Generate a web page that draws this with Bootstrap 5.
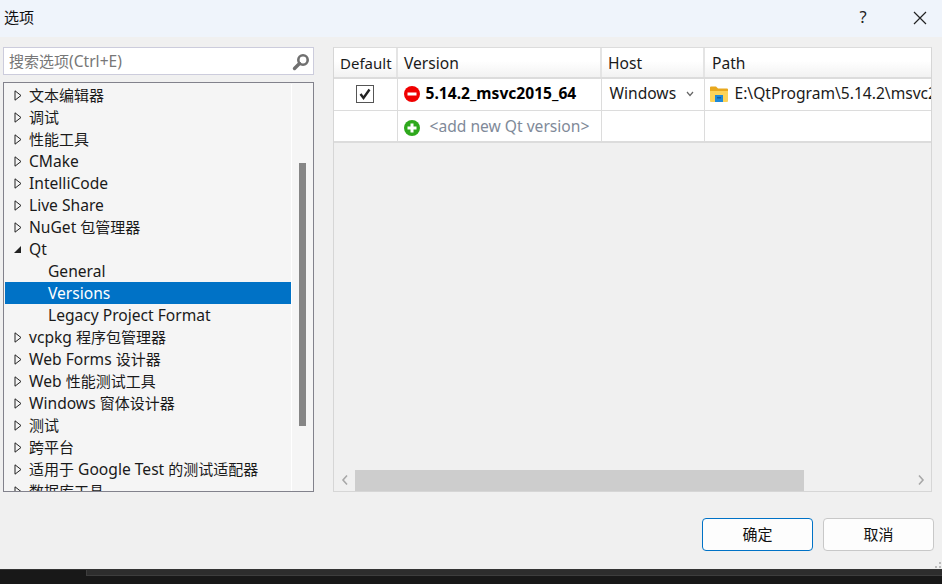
<!DOCTYPE html>
<html lang="zh">
<head>
<meta charset="utf-8">
<title>选项</title>
<link rel="stylesheet" href="https://cdn.jsdelivr.net/npm/bootstrap@5.3.0/dist/css/bootstrap.min.css">
<style>
html,body{height:584px;overflow:hidden;margin:0}
body{background:#181818;font-family:"Noto Sans","Noto Sans CJK SC",sans-serif;font-size:15.6px;color:#1a1a1a}
.cj{font-size:15px}
.dlg{height:570px;background:#f0f0f0;position:relative;border-bottom:1px solid #333}
.dlg-title{height:37px;background:#eff4fb;padding:0 2px 3px 4px}
.dlg-title .ttl{font-size:15px;color:#111}
.tbtn{width:40px;height:34px;padding:0;border:0;background:none;color:#222;font-size:16.5px}
.tbtn.helpbtn{margin-right:21px;width:32px}
.main-area{height:445px;margin-top:10px;padding:0 10px 0 3px;gap:19px}
.leftcol{width:311px;gap:7px}
.searchbox{height:28px;background:#fff;border:1px solid #ccccdc;padding:1px 3px 0 5px;color:#777}
.treebox{height:410px;background:#f5f5f5;border:1px solid #82828c;padding:1px 0 0 1px;overflow:hidden}
.treelist{width:286px;flex:none;height:408px;overflow:hidden}
.tnode{height:22px;line-height:22px;padding-left:9px;white-space:nowrap;gap:7px}
.tnode.kid{padding-left:43px}
.tnode.sel{background:#0072c6;color:#fff}
.arrow{flex:none;width:8px;height:11px}
.tree-sb{width:21px;flex:none;background:#f5f5f5;border-left:1px solid #fff;padding-top:79px;padding-left:7px}
.tree-thumb{width:7px;height:263px;background:#868686}
.rightcol{width:599px;background:#f0f0f0;border:1px solid #d6d6d6;border-top-color:#dcdcdc}
.tblwrap{flex:1;overflow:hidden}
.qt-grid{table-layout:fixed;width:640px;border-collapse:collapse;margin:0}
.qt-grid th,.qt-grid td{border:1px solid #dcdcdc;border-top:0;padding:0 6px;font-weight:400;white-space:nowrap;overflow:hidden;background:#fff}
.qt-grid th{height:30px;padding-top:2px;background:linear-gradient(#fff 45%,#f2f2f2);border-bottom:2px solid #dcdcdc;border-right:2px solid #e4e4e4}
.qt-grid th:first-child{font-size:15px}
.qt-grid th:nth-child(4){padding-left:7px}
.qt-grid td:nth-child(3){padding-left:8px}
.qt-grid td:nth-child(4){padding-left:5px}
.qt-grid tbody tr:first-child td{height:32px}
.qt-grid tbody tr:last-child td{height:32px;padding-top:4px;border-bottom:2px solid #dcdcdc}
.qt-grid td:first-child,.qt-grid th:first-child{border-left:0}
.celltxt{position:relative;top:-1px}
.chk{width:18px;height:18px;border:1px solid #555;background:#fff;display:block;margin:0 auto}
.vname{font-weight:700;color:#000}
.addnew{color:#7f8a99}
.ico-run{margin-right:6px}
.ico-add{margin-right:10px}
.ico-dir{margin-right:7px}
.ico-drop{margin-right:4px}
.hsb{height:22px;padding:0;background:#f0f0f0}
.hsb-arrow{width:21px;flex:none;color:#a0a0a0}
.hsb-thumb{width:449px;background:#cdcdcd;height:21px}
.foot{gap:10px;padding:26px 8px 0 0}
.dlgbtn{width:111px;height:33px;background:#fdfdfd;border:1px solid #c8c8c8;border-radius:4px;font-size:15px;color:#111;padding:0}
.dlgbtn.dflt{border-color:#0072c6}
.grip{position:absolute;right:1px;bottom:1px}
.strip{height:13px;padding-left:86px}
.strip-field{height:6px;background:#2d2d2d;border-bottom:1px solid #3d3d3d;border-left:1px solid #3d3d3d}
</style>
</head>
<body>
<div class="dlg d-flex flex-column">
  <div class="dlg-title d-flex align-items-center">
    <span class="ttl flex-grow-1">选项</span>
    <button class="tbtn helpbtn" type="button" aria-label="help">?</button>
    <button class="tbtn" type="button" aria-label="close"><svg width="14" height="14" viewBox="0 0 14 14"><path d="M1 1 13 13M13 1 1 13" stroke="#222" stroke-width="1.2" fill="none"/></svg></button>
  </div>
  <div class="main-area d-flex">
    <div class="leftcol d-flex flex-column">
      <div class="searchbox d-flex align-items-center justify-content-between">
        <span><span class="cj">搜索选项</span>(Ctrl+E)</span>
        <svg width="18" height="18" viewBox="0 0 18 18"><circle cx="11" cy="7" r="4.7" fill="none" stroke="#707070" stroke-width="2.6"/><path d="M7.5 10.5 2.5 15.5" stroke="#707070" stroke-width="3.4" stroke-linecap="round"/></svg>
      </div>
      <div class="treebox d-flex">
        <div class="treelist">
          <div class="tnode d-flex align-items-center"><svg class="arrow" viewBox="0 0 8 11"><path d="M1 .8 7 5.5 1 10.2Z" fill="none" stroke="#222"/></svg><span class="cj">文本编辑器</span></div>
          <div class="tnode d-flex align-items-center"><svg class="arrow" viewBox="0 0 8 11"><path d="M1 .8 7 5.5 1 10.2Z" fill="none" stroke="#222"/></svg><span class="cj">调试</span></div>
          <div class="tnode d-flex align-items-center"><svg class="arrow" viewBox="0 0 8 11"><path d="M1 .8 7 5.5 1 10.2Z" fill="none" stroke="#222"/></svg><span class="cj">性能工具</span></div>
          <div class="tnode d-flex align-items-center"><svg class="arrow" viewBox="0 0 8 11"><path d="M1 .8 7 5.5 1 10.2Z" fill="none" stroke="#222"/></svg>CMake</div>
          <div class="tnode d-flex align-items-center"><svg class="arrow" viewBox="0 0 8 11"><path d="M1 .8 7 5.5 1 10.2Z" fill="none" stroke="#222"/></svg>IntelliCode</div>
          <div class="tnode d-flex align-items-center"><svg class="arrow" viewBox="0 0 8 11"><path d="M1 .8 7 5.5 1 10.2Z" fill="none" stroke="#222"/></svg>Live Share</div>
          <div class="tnode d-flex align-items-center"><svg class="arrow" viewBox="0 0 8 11"><path d="M1 .8 7 5.5 1 10.2Z" fill="none" stroke="#222"/></svg><span>NuGet <span class="cj">包管理器</span></span></div>
          <div class="tnode d-flex align-items-center"><svg class="arrow" viewBox="0 0 8 11"><path d="M7 2 7 9 0 9Z" fill="#222"/></svg>Qt</div>
          <div class="tnode kid d-flex align-items-center">General</div>
          <div class="tnode kid sel d-flex align-items-center">Versions</div>
          <div class="tnode kid d-flex align-items-center">Legacy Project Format</div>
          <div class="tnode d-flex align-items-center"><svg class="arrow" viewBox="0 0 8 11"><path d="M1 .8 7 5.5 1 10.2Z" fill="none" stroke="#222"/></svg><span>vcpkg <span class="cj">程序包管理器</span></span></div>
          <div class="tnode d-flex align-items-center"><svg class="arrow" viewBox="0 0 8 11"><path d="M1 .8 7 5.5 1 10.2Z" fill="none" stroke="#222"/></svg><span>Web Forms <span class="cj">设计器</span></span></div>
          <div class="tnode d-flex align-items-center"><svg class="arrow" viewBox="0 0 8 11"><path d="M1 .8 7 5.5 1 10.2Z" fill="none" stroke="#222"/></svg><span>Web <span class="cj">性能测试工具</span></span></div>
          <div class="tnode d-flex align-items-center"><svg class="arrow" viewBox="0 0 8 11"><path d="M1 .8 7 5.5 1 10.2Z" fill="none" stroke="#222"/></svg><span>Windows <span class="cj">窗体设计器</span></span></div>
          <div class="tnode d-flex align-items-center"><svg class="arrow" viewBox="0 0 8 11"><path d="M1 .8 7 5.5 1 10.2Z" fill="none" stroke="#222"/></svg><span class="cj">测试</span></div>
          <div class="tnode d-flex align-items-center"><svg class="arrow" viewBox="0 0 8 11"><path d="M1 .8 7 5.5 1 10.2Z" fill="none" stroke="#222"/></svg><span class="cj">跨平台</span></div>
          <div class="tnode d-flex align-items-center"><svg class="arrow" viewBox="0 0 8 11"><path d="M1 .8 7 5.5 1 10.2Z" fill="none" stroke="#222"/></svg><span><span class="cj">适用于</span> Google Test <span class="cj">的测试适配器</span></span></div>
          <div class="tnode d-flex align-items-center"><svg class="arrow" viewBox="0 0 8 11"><path d="M1 .8 7 5.5 1 10.2Z" fill="none" stroke="#222"/></svg><span class="cj">数据库工具</span></div>
        </div>
        <div class="tree-sb"><div class="tree-thumb"></div></div>
      </div>
    </div>
    <div class="rightcol d-flex flex-column">
      <div class="tblwrap">
        <table class="qt-grid">
          <colgroup><col style="width:63px"><col style="width:204px"><col style="width:103px"><col style="width:270px"></colgroup>
          <thead><tr><th>Default</th><th>Version</th><th>Host</th><th>Path</th></tr></thead>
          <tbody>
            <tr>
              <td><span class="chk"><svg width="16" height="16" viewBox="0 0 16 16" class="d-block"><path d="M3.5 8 6.5 12 12.5 3.5" fill="none" stroke="#222" stroke-width="2.4"/></svg></span></td>
              <td><div class="d-flex align-items-center"><svg width="16" height="16" viewBox="0 0 16 16" class="flex-shrink-0 ico-run"><circle cx="8" cy="8" r="8" fill="#f00000"/><rect x="3.5" y="6.5" width="9" height="3" fill="#fff"/></svg><span class="vname celltxt">5.14.2_msvc2015_64</span></div></td>
              <td><div class="d-flex align-items-center justify-content-between"><span class="celltxt">Windows</span><svg width="8" height="6" viewBox="0 0 8 6" class="ico-drop"><path d="M1 1 4 4.5 7 1" fill="none" stroke="#666" stroke-width="1.2"/></svg></div></td>
              <td><div class="d-flex align-items-center"><svg width="18" height="16" viewBox="0 0 18 16" class="flex-shrink-0 ico-dir"><path d="M0 1.5a1 1 0 0 1 1-1h5l2 2h9a1 1 0 0 1 1 1V7H0Z" fill="#e8a81e"/><path d="M0 5h18v10a1 1 0 0 1-1 1H1a1 1 0 0 1-1-1Z" fill="#fbd35a"/><rect x="5" y="9" width="8" height="7" fill="#1e88d8"/><rect x="7" y="11" width="4" height="1.5" fill="#0f5fa8"/></svg><span class="celltxt">E:\QtProgram\5.14.2\msvc2015_64</span></div></td>
            </tr>
            <tr>
              <td></td>
              <td><div class="d-flex align-items-center"><svg width="16" height="16" viewBox="0 0 16 16" class="flex-shrink-0 ico-add"><circle cx="8" cy="8" r="8" fill="#2ea81c"/><path d="M8 3.5v9M3.5 8h9" stroke="#fff" stroke-width="3"/></svg><span class="addnew celltxt">&lt;add new Qt version&gt;</span></div></td>
              <td></td>
              <td></td>
            </tr>
          </tbody>
        </table>
      </div>
      <div class="hsb d-flex align-items-center">
        <div class="hsb-arrow d-flex justify-content-center"><svg width="8" height="12" viewBox="0 0 8 12"><path d="M6 1.5 2 6 6 10.5" fill="none" stroke="#a8a8a8" stroke-width="1.6"/></svg></div>
        <div class="hsb-thumb"></div>
        <div class="flex-grow-1"></div>
        <div class="hsb-arrow d-flex justify-content-center"><svg width="8" height="12" viewBox="0 0 8 12"><path d="M2 1.5 6 6 2 10.5" fill="none" stroke="#a8a8a8" stroke-width="1.6"/></svg></div>
      </div>
    </div>
  </div>
  <div class="foot d-flex justify-content-end">
    <button class="dlgbtn dflt" type="button">确定</button>
    <button class="dlgbtn" type="button">取消</button>
  </div>
  <svg class="grip" width="6" height="6" viewBox="0 0 6 6"><path d="M4 0h2v2H4ZM0 4h2v2H0ZM4 4h2v2H4Z" fill="#bbb"/></svg>
</div>
<div class="strip"><div class="strip-field"></div></div>
</body>
</html>
